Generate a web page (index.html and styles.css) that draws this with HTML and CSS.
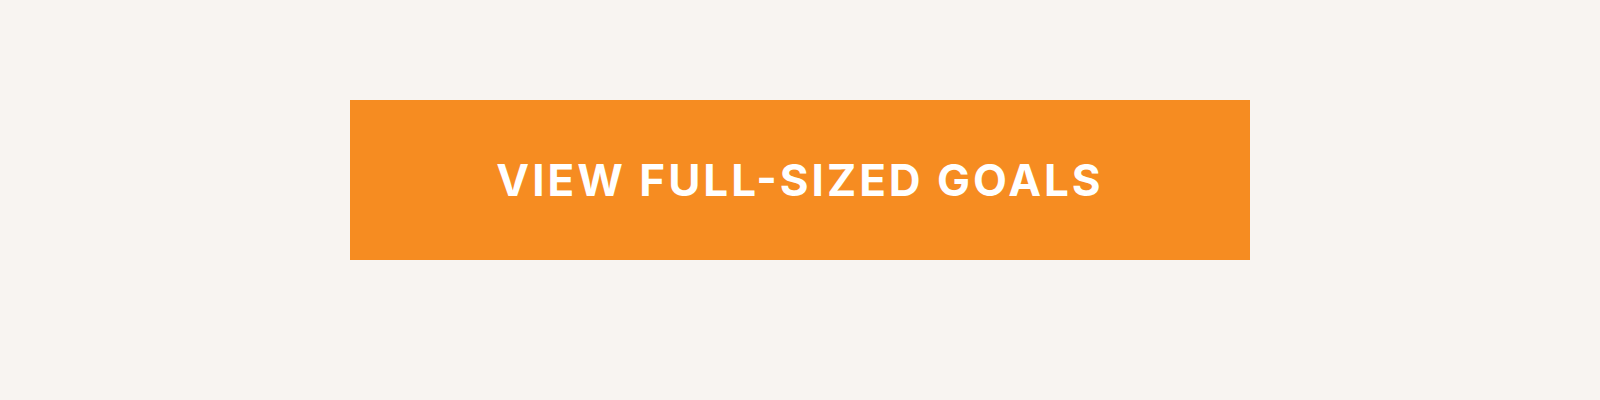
FILE: index.html
```html
<!DOCTYPE html>
<html lang="en">
    <head>
        <meta charset="utf-8">
        <title>View Full-Sized Goals</title>
        <meta name="viewport" content="width=device-width, initial-scale=1.0">
        <link rel="stylesheet" href="styles.css">
    </head>
    <body>
        <div class="cta">
            <a class="cta__button" href="#goals">View Full-Sized Goals</a>
        </div>
    </body>
</html>
```

FILE: styles.css
```css
:root {
    --font-main: Inter, Arial, sans-serif;
    --color-page: #f8f4f1;
    --color-button: #f68c21;
    --color-white: #fff;
}
body {
    margin: 0;
    background-color: var(--color-page);
    font-family: var(--font-main);
}
.cta {
    display: flex;
    justify-content: center;
    padding: 100px 40px;
}
.cta__button {
    padding: 50px 146px;
    background-color: var(--color-button);
    color: var(--color-white);
    font-size: 44px;
    font-weight: 700;
    font-feature-settings: "case";
    line-height: 60px;
    letter-spacing: 3px;
    text-align: center;
    text-decoration: none;
    text-transform: uppercase;
}
```
